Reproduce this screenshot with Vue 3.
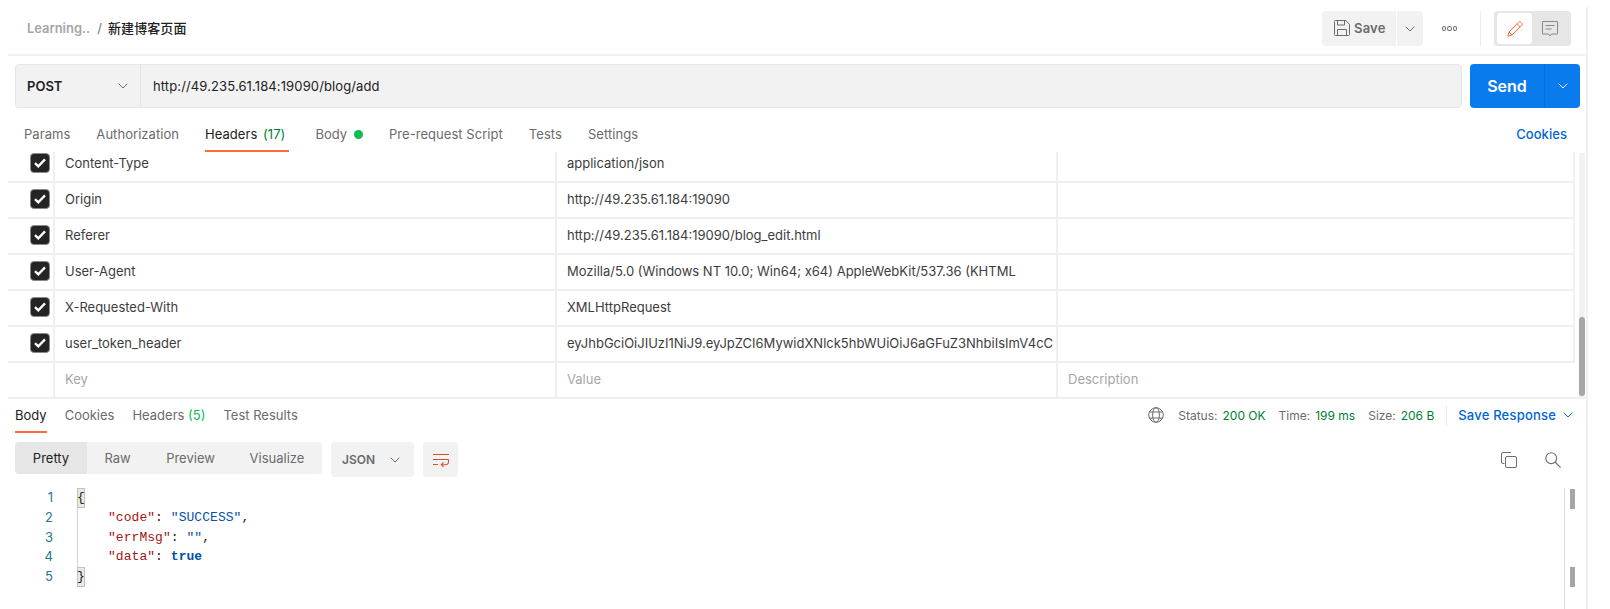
<script setup>
const tabs = [
  { label: 'Params' },
  { label: 'Authorization' },
  { label: 'Headers', count: '(17)', active: true },
  { label: 'Body', dot: true },
  { label: 'Pre-request Script' },
  { label: 'Tests' },
  { label: 'Settings' },
]
const rows = [
  ['Content-Type', 'application/json'],
  ['Origin', 'http://49.235.61.184:19090'],
  ['Referer', 'http://49.235.61.184:19090/blog_edit.html'],
  ['User-Agent', 'Mozilla/5.0 (Windows NT 10.0; Win64; x64) AppleWebKit/537.36 (KHTML'],
  ['X-Requested-With', 'XMLHttpRequest'],
  ['user_token_header', 'eyJhbGciOiJIUzI1NiJ9.eyJpZCI6MywidXNlck5hbWUiOiJ6aGFuZ3NhbiIsImV4cC'],
]
</script>

<template>
  <div class="page">
    <div class="shell">
      <header class="topbar">
        <div class="crumbs">
          <span class="crumb-muted">Learning..</span>
          <span class="crumb-sep">/</span>
          <span class="crumb-name">新建博客页面</span>
        </div>
        <div class="top-actions">
          <button class="save-btn">
            <svg width="16" height="16" viewBox="0 0 16 16" fill="none" stroke="#6b6b6b" stroke-width="1">
              <path d="M.5 1.5a1 1 0 0 1 1-1h10.3l3.7 3.7v10.3a1 1 0 0 1-1 1h-13a1 1 0 0 1-1-1z" />
              <path d="M3.5.5v4.5h7V.5M3.5 15.5V9.5h9v6" />
            </svg>
            <span>Save</span>
          </button>
          <button class="save-more">
            <svg class="chev" width="10" height="6" viewBox="0 0 10 6" fill="none" stroke="#6b6b6b"><path d="M.7.7 5 5l4.3-4.3" /></svg>
          </button>
          <div class="dots"><i></i><i></i><i></i></div>
          <div class="vline"></div>
          <div class="toggle">
            <div class="toggle-on">
              <svg width="16" height="16" viewBox="0 0 16 16" fill="none" stroke="#ff6c37" stroke-width="1" stroke-linejoin="round">
                <path d="M11.6 1.2a1.5 1.5 0 0 1 2.1 0l1 1a1.5 1.5 0 0 1 0 2.1L5 14 .8 15.3 2 11zM10 2.8l3.2 3.2M2 11l3 3" />
              </svg>
            </div>
            <div class="toggle-off">
              <svg width="16" height="16" viewBox="0 0 16 16" fill="none" stroke="#8a8a8a" stroke-width="1">
                <path d="M.5.5h15v12.5h-6L8 15l-1.5-2h-6zM3.5 4.5h9M3.5 8h6" />
              </svg>
            </div>
          </div>
        </div>
      </header>

      <div class="request">
        <div class="urlbar">
          <div class="method">
            <span>POST</span>
            <svg width="10" height="6" viewBox="0 0 10 6" fill="none" stroke="#6b6b6b"><path d="M.7.7 5 5l4.3-4.3" /></svg>
          </div>
          <div class="url">http://49.235.61.184:19090/blog/add</div>
        </div>
        <div class="send">
          <span class="send-label">Send</span>
          <span class="send-more">
            <svg width="10" height="6" viewBox="0 0 10 6" fill="none" stroke="#fff"><path d="M.7.7 5 5l4.3-4.3" /></svg>
          </span>
        </div>
      </div>

      <nav class="tabs">
        <div v-for="t in tabs" :key="t.label" class="tab" :class="{ active: t.active }">
          {{ t.label }}
          <span v-if="t.count" class="count">{{ t.count }}</span>
          <span v-if="t.dot" class="dot"></span>
        </div>
        <a class="cookies">Cookies</a>
      </nav>

      <section class="table-wrap">
        <div class="table-clip">
          <div class="table">
            <div v-for="r in rows" :key="r[0]" class="row">
              <div class="cell check">
                <span class="box">
                  <svg width="12" height="10" viewBox="0 0 12 10" fill="none" stroke="#fff" stroke-width="2.3"><path d="M1 5.2 4.3 8.4 11 1.4" /></svg>
                </span>
              </div>
              <div class="cell key">{{ r[0] }}</div>
              <div class="cell val">{{ r[1] }}</div>
              <div class="cell desc"></div>
            </div>
            <div class="row row-new">
              <div class="cell check"></div>
              <div class="cell key ph">Key</div>
              <div class="cell val ph">Value</div>
              <div class="cell desc ph">Description</div>
            </div>
          </div>
        </div>
        <div class="vscroll"><div class="vthumb"></div></div>
      </section>

      <section class="response">
        <div class="res-head">
          <div class="res-tabs">
            <div class="res-tab active">Body</div>
            <div class="res-tab">Cookies</div>
            <div class="res-tab">Headers <span class="count-light">(5)</span></div>
            <div class="res-tab">Test Results</div>
          </div>
          <div class="res-meta">
            <svg class="globe" width="16" height="16" viewBox="0 0 16 16" fill="none" stroke="#6b6b6b" stroke-width="1">
              <circle cx="8" cy="8" r="7.3" />
              <ellipse cx="8" cy="8" rx="3.4" ry="7.3" />
              <path d="M1.4 5h13.2M1.4 11h13.2" />
            </svg>
            <span class="m-label">Status:</span><span class="m-val m-status">200 OK</span>
            <span class="m-label">Time:</span><span class="m-val m-time">199 ms</span>
            <span class="m-label">Size:</span><span class="m-val m-size">206 B</span>
            <span class="m-div"></span>
            <a class="save-res">Save Response</a>
            <svg class="save-chev" width="10" height="6" viewBox="0 0 10 6" fill="none" stroke="#0265d2"><path d="M.7.7 5 5l4.3-4.3" /></svg>
          </div>
        </div>

        <div class="toolbar">
          <div class="views">
            <div class="view on">Pretty</div>
            <div class="view raw">Raw</div>
            <div class="view prev">Preview</div>
            <div class="view vis">Visualize</div>
          </div>
          <div class="lang">
            <span>JSON</span>
            <svg width="10" height="6" viewBox="0 0 10 6" fill="none" stroke="#6b6b6b"><path d="M.7.7 5 5l4.3-4.3" /></svg>
          </div>
          <div class="wrap">
            <svg width="16" height="16" viewBox="0 0 16 16" fill="none" stroke="#d9512c" stroke-width="1.1">
              <path d="M0 2.5h16M0 7.5h15.5M0 12.5h5M15.5 7.5v2.5a2.7 2.7 0 0 1-2.7 2.7H8.5M10.5 10.5 8.3 12.7l2.2 2.2" />
            </svg>
          </div>
          <div class="tool-right">
            <svg width="16" height="16" viewBox="0 0 16 16" fill="none" stroke="#6b6b6b" stroke-width="1">
              <path d="M3.5 11.5H2A1.5 1.5 0 0 1 .5 10V2A1.5 1.5 0 0 1 2 .5h8" />
              <rect x="4.5" y="4.5" width="11" height="11" rx="1.5" />
            </svg>
            <svg width="16" height="16" viewBox="0 0 16 16" fill="none" stroke="#6b6b6b" stroke-width="1.1">
              <circle cx="6.2" cy="6.2" r="5.4" />
              <path d="M10 10l5.6 5.6" />
            </svg>
          </div>
        </div>

        <div class="code-area">
          <div class="code">
            <div class="ln"><span class="no">1</span><span class="src"><span class="match">{</span></span></div>
            <div class="ln"><span class="no">2</span><span class="src guide"><span class="k">"code"</span>: <span class="s">"SUCCESS"</span>,</span></div>
            <div class="ln"><span class="no">3</span><span class="src guide"><span class="k">"errMsg"</span>: <span class="s">""</span>,</span></div>
            <div class="ln"><span class="no">4</span><span class="src guide"><span class="k">"data"</span>: <span class="b">true</span></span></div>
            <div class="ln"><span class="no">5</span><span class="src"><span class="match">}</span></span></div>
          </div>
          <div class="minimap">
            <div class="mark first"></div>
            <div class="mark second"></div>
          </div>
        </div>
      </section>
    </div>
  </div>
</template>

<style scoped>
.page {
  width: 1610px;
  height: 609px;
  overflow: hidden;
  background: #fff;
  font-family: Inter, "Noto Sans CJK SC", sans-serif;
  font-size: 13px;
  color: #212121;
}
.shell {
  box-sizing: border-box;
  width: 1580px;
  height: 602px;
  margin: 7px 0 0 8px;
  border-right: 2px solid #f0f0f0;
  display: flex;
  flex-direction: column;
}
button { border: 0; font: inherit; padding: 0; }

.topbar {
  box-sizing: border-box;
  height: 49px;
  flex: none;
  padding: 4px 15px 8px 19px;
  display: flex;
  align-items: stretch;
  border-bottom: 2px solid #f2f2f2;
}
.crumbs { display: flex; align-items: center; font-weight: 500; padding-bottom: 2px; }
.crumb-muted { color: #a6a6a6; font-weight: 600; letter-spacing: -.05px; }
.crumb-sep { color: #8a8a8a; margin: 0 6px 0 7px; }
.crumb-name { color: #212121; font-weight: 500; font-size: 13px; letter-spacing: .1px; }
.top-actions { margin-left: auto; display: flex; align-items: stretch; }
.save-btn {
  width: 74px;
  background: #f2f2f2;
  border-radius: 4px 0 0 4px;
  display: flex;
  align-items: center;
  padding: 0 0 2px 12px;
  gap: 4px;
  color: #6b6b6b;
  font-weight: 600;
  letter-spacing: .2px;
}
.save-more {
  width: 26px;
  margin-left: 1px;
  background: #f2f2f2;
  border-radius: 0 4px 4px 0;
  display: flex;
  align-items: center;
  justify-content: center;
}
.dots { width: 15px; margin-left: 19px; display: flex; align-items: center; gap: 1px; }
.dots i {
  box-sizing: border-box;
  width: 5px;
  height: 5px;
  border: 1px solid #6b6b6b;
  border-radius: 50%;
  display: block;
}
.vline { width: 1px; background: #ededed; margin-left: 23px; }
.toggle {
  width: 77px;
  margin-left: 13px;
  background: #e6e6e6;
  border-radius: 4px;
  box-sizing: border-box;
  padding: 2px 3px;
  display: flex;
}
.toggle-on {
  width: 35px;
  background: #fff;
  border-radius: 3px;
  display: flex;
  align-items: center;
  justify-content: center;
}
.toggle-off { flex: 1; display: flex; align-items: center; justify-content: center; }

.request {
  height: 44px;
  flex: none;
  margin-top: 8px;
  padding-left: 7px;
  display: flex;
  gap: 8px;
}
.urlbar {
  box-sizing: border-box;
  width: 1447px;
  background: #f2f2f2;
  border: 1px solid #e6e6e6;
  border-radius: 4px;
  display: flex;
  align-items: center;
}
.method {
  box-sizing: border-box;
  width: 125px;
  height: 100%;
  padding: 0 12px 0 11px;
  border-right: 1px solid #e6e6e6;
  display: flex;
  align-items: center;
  justify-content: space-between;
  font-weight: 600;
}
.url { padding-left: 12px; color: #212121; letter-spacing: .12px; }
.send {
  width: 110px;
  background: #097bed;
  border-radius: 4px;
  display: flex;
  color: #fff;
}
.send-label {
  width: 74px;
  display: flex;
  align-items: center;
  justify-content: center;
  font-size: 16px;
  font-weight: 600;
  border-right: 1px solid #0a6fd4;
}
.send-more { flex: 1; display: flex; align-items: center; justify-content: center; }

.tabs {
  height: 44px;
  flex: none;
  padding: 0 19px 0 16px;
  display: flex;
  align-items: stretch;
  gap: 26px;
  letter-spacing: .05px;
}
.tab {
  box-sizing: border-box;
  padding-top: 18px;
  border-bottom: 2px solid transparent;
  color: #6b6b6b;
  white-space: nowrap;
}
.tab.active { color: #212121; border-bottom-color: #ff6c37; padding-right: 4px; }
.count { color: #007f31; margin-left: 2px; }
.dot {
  display: inline-block;
  width: 9px;
  height: 9px;
  margin-left: 3px;
  border-radius: 50%;
  background: #0cbb52;
}
.cookies {
  margin-left: auto;
  padding-top: 18px;
  color: #0265d2;
  font-weight: 500;
}

.table-wrap {
  height: 247px;
  flex: none;
  display: flex;
  border-bottom: 2px solid #f0f0f0;
  box-sizing: border-box;
}
.table-clip { width: 1567px; overflow: hidden; padding-top: 1px; }
.table { margin-top: -6px; }
.row {
  box-sizing: border-box;
  height: 36px;
  display: grid;
  grid-template-columns: 45px 502px 501px 519px;
  border-bottom: 2px solid #f0f0f0;
}
.row-new { border-bottom: 0; }
.cell {
  box-sizing: border-box;
  display: flex;
  align-items: center;
  padding: 0 0 2px 10px;
  border-left: 2px solid #f0f0f0;
  color: #3d3d3d;
  overflow: hidden;
  white-space: nowrap;
}
.row-new .cell { padding-bottom: 4px; }
.cell.check { border-left: 0; padding: 0 0 2px 22px; }
.desc { border-right: 2px solid #f0f0f0; }
.row-new .desc { border-right: 0; }
.ph { color: #a6a6a6; }
.box {
  box-sizing: border-box;
  width: 20px;
  height: 20px;
  background: #242424;
  border: 1px solid #8a8a8a;
  border-radius: 4px;
  display: flex;
  align-items: center;
  justify-content: center;
}
.vscroll {
  width: 6px;
  margin: 1px 0 0 4px;
  background: #f2f2f2;
  display: flex;
  flex-direction: column;
  justify-content: flex-end;
  padding-bottom: 1px;
}
.vthumb { height: 79px; background: #a6a6a6; border-radius: 3px; }

.response { flex: 1; display: flex; flex-direction: column; min-height: 0; }
.res-head {
  height: 34px;
  flex: none;
  padding: 0 13px 0 7px;
  display: flex;
  justify-content: space-between;
}
.res-tabs { display: flex; gap: 18px; }
.res-tab {
  box-sizing: border-box;
  padding-top: 8px;
  border-bottom: 2px solid transparent;
  color: #6b6b6b;
  white-space: nowrap;
}
.res-tab.active { color: #212121; border-bottom-color: #ff6c37; }
.count-light { color: #0cbb52; }
.res-meta {
  display: flex;
  align-items: center;
  height: 32px;
  font-size: 12px;
  white-space: nowrap;
}
.globe { margin-right: 14px; }
.m-label { color: #6b6b6b; margin-right: 5px; }
.m-val { color: #007f31; }
.m-status, .m-time { margin-right: 13px; }
.m-size { margin-right: 12px; }
.m-div { width: 1px; height: 21px; background: #ededed; margin-right: 11px; }
.save-res { color: #0265d2; font-size: 13px; font-weight: 500; letter-spacing: .2px; }
.save-chev { margin-left: 7px; }

.toolbar {
  height: 35px;
  flex: none;
  margin-top: 9px;
  padding-left: 7px;
  display: flex;
  align-items: flex-start;
}
.views {
  width: 307px;
  height: 32px;
  background: #f2f2f2;
  border-radius: 4px;
  display: flex;
  color: #6b6b6b;
  overflow: hidden;
}
.view { display: flex; align-items: center; justify-content: center; }
.view.on { width: 72px; background: #e6e6e6; color: #212121; }
.view.raw { width: 61px; }
.view.prev { width: 85px; }
.view.vis { width: 88px; }
.lang {
  box-sizing: border-box;
  width: 83px;
  height: 35px;
  margin-left: 9px;
  padding: 0 14px 0 11px;
  background: #f2f2f2;
  border-radius: 4px;
  display: flex;
  align-items: center;
  justify-content: space-between;
  font-size: 12px;
  font-weight: 600;
  color: #6b6b6b;
}
.wrap {
  width: 35px;
  height: 35px;
  margin-left: 9px;
  background: #f2f2f2;
  border-radius: 4px;
  display: flex;
  align-items: center;
  justify-content: center;
}
.tool-right {
  margin-left: auto;
  margin-right: 25px;
  height: 35px;
  display: flex;
  align-items: center;
  gap: 28px;
}

.code-area { flex: 1; display: flex; margin-top: 11px; min-height: 0; }
.code {
  flex: 1;
  font-family: "Liberation Mono", "DejaVu Sans Mono", monospace;
  font-size: 13px;
  letter-spacing: .05px;
  color: #212121;
}
.ln { height: 19.8px; line-height: 19.8px; display: flex; }
.no {
  width: 45px;
  text-align: right;
  color: #237893;
  font-family: Inter, sans-serif;
  font-size: 13px;
}
.src { margin-left: 24px; white-space: pre; flex: 1; }
.guide { box-shadow: inset 1px 0 0 #d3d3d3; padding-left: 31px; }
.match {
  display: inline-block;
  box-sizing: border-box;
  width: 8px;
  height: 19.8px;
  background: #eaeae4;
  box-shadow: inset 0 0 0 1px #c2c2b8;
}
.k { color: #a31515; }
.s { color: #0451a5; }
.b { color: #0451a5; font-weight: 700; }
.minimap {
  width: 22px;
  flex: none;
  border-left: 1px solid #d9d9d9;
  display: flex;
  flex-direction: column;
  padding-left: 5px;
  box-sizing: border-box;
}
.mark { width: 5px; height: 20px; background: #a6a6a6; }
.mark.first { margin-top: 1px; }
.mark.second { margin-top: 58px; }
</style>

<style>
html, body { margin: 0; background: #fff; }
</style>
